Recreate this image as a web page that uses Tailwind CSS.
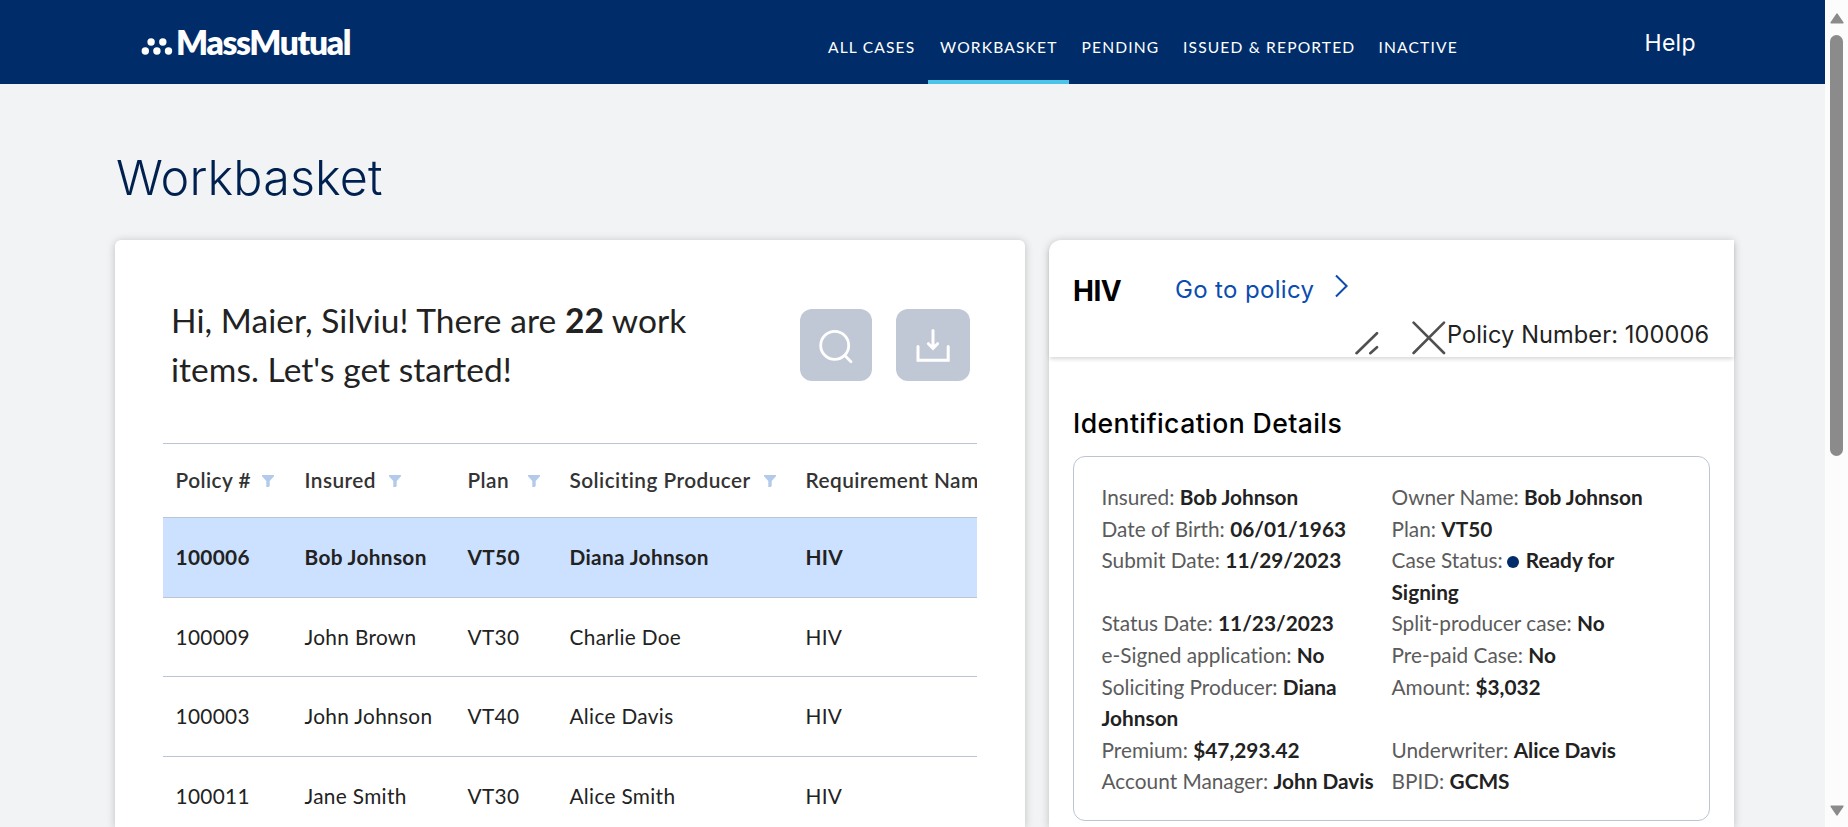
<!DOCTYPE html>
<html lang="en">
<head>
<meta charset="utf-8">
<title>Workbasket</title>
<script src="https://cdn.jsdelivr.net/npm/@tailwindcss/browser@4"></script>
</head>
<body class="flex h-[827px] w-[1848px] overflow-hidden bg-[#f2f3f5] font-['Lato',sans-serif] text-[#222] [font-variant-ligatures:none]">
<svg class="hidden"><symbol id="funnel" viewBox="0 0 12 12"><path d="M0 0H12V1.2L7.7 6V11L6.6 12H4.3V6L0 1.2Z" fill="#b3caeb"/></symbol></svg>
<div class="flex h-full w-[1825px] flex-col">
  <header class="flex h-[84px] shrink-0 bg-[#002d69] text-white">
    <div class="flex w-[816px] items-start pt-[22px] pl-[141px]">
      <svg class="mt-[15px] h-[18px] w-[32px] shrink-0" viewBox="0 0 32 18" fill="#fff"><circle cx="4.3" cy="14" r="3.7"/><circle cx="15.9" cy="14" r="3.7"/><circle cx="27.5" cy="14" r="3.7"/><circle cx="10.1" cy="5" r="3.7"/><circle cx="21.8" cy="5" r="3.7"/></svg>
      <span class="ml-[3px] text-[33.5px] leading-[40px] font-extrabold tracking-[-1.35px]">MassMutual</span>
    </div>
    <nav class="flex text-[15.6px] leading-[20px] tracking-[1.15px] whitespace-nowrap">
      <a class="w-[112px] pt-[37px] pl-[12px]">ALL CASES</a>
      <a class="w-[141px] border-b-4 border-[#4cc4ea] pt-[37px] pl-[12px]">WORKBASKET</a>
      <a class="w-[102px] pt-[37px] pl-[12.5px]">PENDING</a>
      <a class="w-[195px] pt-[37px] pl-[12px]">ISSUED &amp; REPORTED</a>
      <a class="w-[103px] pt-[37px] pl-[12.5px]">INACTIVE</a>
    </nav>
    <a class="pt-[28px] pl-[175.5px] font-['Inter',sans-serif] text-[23px] leading-[30px] tracking-[0.3px]">Help</a>
  </header>
  <h1 class="mt-[64px] ml-[116px] h-[92px] shrink-0 font-['Inter',sans-serif] text-[48.5px] leading-[60px] font-light tracking-[0.15px] text-[#00214f]">Workbasket</h1>
  <main class="flex min-h-0 flex-1 gap-6 overflow-hidden pt-2 -mt-2 pl-[115px]">
    <section class="h-full w-[910px] shrink-0 overflow-hidden rounded-t-md bg-white px-12 shadow-[0_1px_8px_rgba(0,0,0,0.22)]">
      <div class="flex h-[203px] pl-[8px]">
        <p class="w-[629px] pt-[56px] text-[33.5px] leading-[49px] tracking-[0.06px]">Hi, Maier, Silviu! There are <b class="font-bold">22</b> work<br>items. Let's get started!</p>
        <div class="flex gap-6 pt-[69px]">
          <button class="h-[72px] w-[72px] rounded-xl bg-[#c1c8d5]"><svg viewBox="0 0 72 72" class="h-[72px] w-[72px]" fill="none" stroke="#fff" stroke-width="2.8" stroke-linecap="round"><circle cx="34.7" cy="36.4" r="14"/><path d="M44.8 46.6L51 52.8"/></svg></button>
          <button class="h-[72px] w-[74px] rounded-xl bg-[#c1c8d5]"><svg viewBox="0 0 74 72" class="h-[72px] w-[74px]" fill="none" stroke="#fff" stroke-width="3" stroke-linecap="round"><path d="M37 21.5V39M32.4 34.7L37 39.3L41.6 34.7"/><path d="M22 37.5V51.3H52.2V37.5"/></svg></button>
        </div>
      </div>
      <div class="w-[814px] overflow-hidden border-t border-[#bdc5d3] text-[20.8px] tracking-[0.33px] whitespace-nowrap">
        <div class="flex h-[74px] items-center border-b border-[#bdc5d3] pl-[12.5px] font-semibold tracking-[0.45px] text-[#333]">
          <div class="flex w-[129px] shrink-0 items-center"><span class="w-[86px] pb-[2px]">Policy #</span><svg class="h-3 w-3"><use href="#funnel"/></svg></div>
          <div class="flex w-[163px] shrink-0 items-center"><span class="w-[84px] pb-[2px]">Insured</span><svg class="h-3 w-3"><use href="#funnel"/></svg></div>
          <div class="flex w-[102px] shrink-0 items-center"><span class="w-[60px] pb-[2px]">Plan</span><svg class="h-3 w-3"><use href="#funnel"/></svg></div>
          <div class="flex w-[236px] shrink-0 items-center"><span class="w-[194px] pb-[2px]">Soliciting Producer</span><svg class="h-3 w-3"><use href="#funnel"/></svg></div>
          <span class="pb-[2px]">Requirement Name</span>
        </div>
        <div class="flex h-[80px] items-center border-b border-[#bdc5d3] bg-[#cce1ff] pb-[2px] pl-[12.5px] font-bold"><span class="w-[129px]">100006</span><span class="w-[163px]">Bob Johnson</span><span class="w-[102px]">VT50</span><span class="w-[236px]">Diana Johnson</span><span>HIV</span></div>
        <div class="flex h-[79px] items-center border-b border-[#bdc5d3] pb-px pl-[12.5px]"><span class="w-[129px]">100009</span><span class="w-[163px]">John Brown</span><span class="w-[102px]">VT30</span><span class="w-[236px]">Charlie Doe</span><span>HIV</span></div>
        <div class="flex h-[80px] items-center border-b border-[#bdc5d3] pb-[2px] pl-[12.5px]"><span class="w-[129px]">100003</span><span class="w-[163px]">John Johnson</span><span class="w-[102px]">VT40</span><span class="w-[236px]">Alice Davis</span><span>HIV</span></div>
        <div class="flex h-[80px] items-center pb-[2px] pl-[12.5px]"><span class="w-[129px]">100011</span><span class="w-[163px]">Jane Smith</span><span class="w-[102px]">VT30</span><span class="w-[236px]">Alice Smith</span><span>HIV</span></div>
      </div>
    </section>
    <section class="h-full w-[685px] shrink-0 rounded-tl-xl bg-white shadow-[0_1px_8px_rgba(0,0,0,0.22)]">
      <div class="h-[117px] rounded-tl-xl pt-[30px] font-['Inter',sans-serif] shadow-[0_3px_4px_-1px_rgba(0,0,0,0.16)]">
        <div class="flex h-[50px] items-start pl-[24px]">
          <h2 class="w-[102px] pt-[4px] text-[28px] leading-[34px] font-bold tracking-[-0.5px] text-black">HIV</h2>
          <a class="w-[159px] pt-[5px] text-[24px] leading-[30px] tracking-[0.35px] text-[#0a4cb0]">Go to policy</a>
          <svg class="mt-[4px] h-6 w-4" viewBox="0 0 16 24" fill="none" stroke="#0a4cb0" stroke-width="2"><path d="M2 1.5L12.6 12L2 22.5"/></svg>
        </div>
        <div class="flex items-start pl-[306px]">
          <svg class="mt-[11px] h-[24px] w-[24px]" viewBox="0 0 24 24" fill="none" stroke="#505050" stroke-width="2.6" stroke-linecap="round"><path d="M1.5 22.2L22 2.2M15.3 22.2L22 16.2"/></svg>
          <svg class="mt-px ml-[33px] h-[34px] w-[34px]" viewBox="0 0 34 34" fill="none" stroke="#505050" stroke-width="2.6" stroke-linecap="round"><path d="M1.6 1.6L32 32M32 1.6L1.6 32"/></svg>
          <span class="pl-px text-[23.6px] leading-[30px] tracking-[0.1px] whitespace-nowrap">Policy Number: 100006</span>
        </div>
      </div>
      <h3 class="mt-[49px] ml-[24px] h-[50px] font-['Inter',sans-serif] text-[26.6px] leading-[34px] font-medium tracking-[0.4px] text-black">Identification Details</h3>
      <div class="ml-6 grid h-[365px] w-[637px] grid-cols-[290px_300px] content-start rounded-xl border border-[#bdc5d3] pt-6 pl-[27.5px] text-[20.8px] leading-[31.6px] text-[#5b5b5b] [&_b]:font-bold [&_b]:text-[#222]">
        <p>Insured: <b>Bob Johnson</b></p><p>Owner Name: <b>Bob Johnson</b></p>
        <p>Date of Birth: <b>06/01/1963</b></p><p>Plan: <b>VT50</b></p>
        <p>Submit Date: <b>11/29/2023</b></p><p>Case Status:<span class="mr-[7px] ml-[4px] inline-block h-3 w-3 rounded-full bg-[#002d69]"></span><b>Ready for<br>Signing</b></p>
        <p>Status Date: <b>11/23/2023</b></p><p>Split-producer case: <b>No</b></p>
        <p>e-Signed application: <b>No</b></p><p>Pre-paid Case: <b>No</b></p>
        <p>Soliciting Producer: <b>Diana<br>Johnson</b></p><p>Amount: <b>$3,032</b></p>
        <p>Premium: <b>$47,293.42</b></p><p>Underwriter: <b>Alice Davis</b></p>
        <p>Account Manager: <b>John Davis</b></p><p>BPID: <b>GCMS</b></p>
      </div>
    </section>
  </main>
</div>
<aside class="flex w-[23px] flex-col items-center bg-[#fcfcfc] pt-[12.5px] pb-[11px]">
  <svg class="h-[11px] w-[14px] shrink-0" viewBox="0 0 14 11"><path d="M7 1.2L12.8 9.8H1.2Z" fill="#8b8b8b" stroke="#8b8b8b" stroke-width="1.6" stroke-linejoin="round"/></svg>
  <div class="mt-[11.5px] h-[421px] w-[13px] rounded-full bg-[#8b8b8b]"></div>
  <svg class="mt-auto h-[11px] w-[14px] shrink-0" viewBox="0 0 14 11"><path d="M7 9.8L12.8 1.2H1.2Z" fill="#8b8b8b" stroke="#8b8b8b" stroke-width="1.6" stroke-linejoin="round"/></svg>
</aside>
</body>
</html>
